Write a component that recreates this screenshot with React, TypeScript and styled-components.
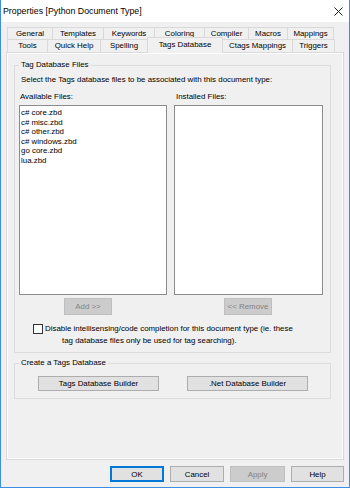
import React from "react";
import styled, { createGlobalStyle } from "styled-components";

interface TabItem {
  label: string;
  width: number;
  selected?: boolean;
}

const topRow: TabItem[] = [
  { label: "General", width: 46 },
  { label: "Templates", width: 52 },
  { label: "Keywords", width: 52 },
  { label: "Coloring", width: 51 },
  { label: "Compiler", width: 45 },
  { label: "Macros", width: 40 },
  { label: "Mappings", width: 47 },
];

const bottomRow: TabItem[] = [
  { label: "Tools", width: 41 },
  { label: "Quick Help", width: 54 },
  { label: "Spelling", width: 48 },
  { label: "Tags Database", width: 76, selected: true },
  { label: "Ctags Mappings", width: 71 },
  { label: "Triggers", width: 43 },
];

const availableFiles = [
  "c# core.zbd",
  "c# misc.zbd",
  "c# other.zbd",
  "c# windows.zbd",
  "go core.zbd",
  "lua.zbd",
];

const GlobalStyle = createGlobalStyle`
  html, body {
    margin: 0;
    padding: 0;
    background: #ffffff;
  }
  body {
    font-family: "Liberation Sans", Arial, sans-serif;
    font-size: 7.9px;
    color: #000;
  }
`;

const Window = styled.div`
  width: 350px;
  height: 488px;
  box-sizing: border-box;
  border: 1px solid #3a8ee6;
  border-top: none;
  background: #f0f0f0;
  display: flex;
  flex-direction: column;
`;

const TitleBar = styled.div`
  height: 22px;
  background: #fff;
  display: flex;
  align-items: center;
  justify-content: space-between;
  padding: 0 6px 0 2px;
  font-size: 8.8px;
`;

const Body = styled.div`
  padding: 0 5px;
  display: flex;
  flex-direction: column;
`;

const TabStrip = styled.div`
  margin: 5px 0 0 1px;
  display: flex;
  flex-direction: column;
`;

const TabRow = styled.div<{ $height: number }>`
  display: flex;
  height: ${(p) => p.$height}px;
`;

const Tab = styled.div<{ $width: number; $selected?: boolean }>`
  box-sizing: border-box;
  width: ${(p) => p.$width}px;
  height: ${(p) => (p.$selected ? "calc(100% + 3px)" : "100%")};
  margin-top: ${(p) => (p.$selected ? "-2px" : "0")};
  position: relative;
  z-index: ${(p) => (p.$selected ? 2 : 1)};
  border: 1px solid #d9d9d9;
  border-bottom: none;
  margin-right: -1px;
  background: #f0f0f0;
  display: flex;
  align-items: center;
  justify-content: center;
  white-space: nowrap;
  line-height: 10px;
  padding-bottom: ${(p) => (p.$selected ? "2px" : "0")};
`;

const Panel = styled.div`
  box-sizing: border-box;
  height: 408px;
  border: 1px solid #d9d9d9;
  box-shadow: inset 1px 1px 0 #ffffff, inset -1px -1px 0 #ffffff;
  display: flex;
  flex-direction: column;
  align-items: flex-start;
  padding-left: 7px;
`;

const GroupBox = styled.fieldset<{ $top: number; $padBottom: number }>`
  box-sizing: border-box;
  width: 317px;
  margin: ${(p) => p.$top}px 0 0 0;
  padding: 0 7px ${(p) => p.$padBottom}px 4px;
  border: 1px solid #dcdcdc;
  min-inline-size: 0;
`;

const GroupTitle = styled.legend`
  padding: 0 2px;
  line-height: 10px;
`;

const Caption = styled.div<{ $top: number; $left: number }>`
  margin: ${(p) => p.$top}px 0 0 ${(p) => p.$left}px;
  line-height: 10px;
  white-space: nowrap;
`;

const Columns = styled.div`
  display: flex;
  gap: 7px;
`;

const Column = styled.div<{ $width: number }>`
  width: ${(p) => p.$width}px;
  display: flex;
  flex-direction: column;
  align-items: flex-start;
`;

const ListBox = styled.div`
  box-sizing: border-box;
  width: 100%;
  height: 190px;
  margin-top: 3px;
  background: #fff;
  border: 1px solid #8c8c8c;
  padding: 2px 0 0 1px;
`;

const ListItem = styled.div`
  line-height: 9.6px;
  white-space: nowrap;
`;

const Button = styled.button<{ $width: number; $height?: number; $offset?: number; $default?: boolean }>`
  box-sizing: border-box;
  width: ${(p) => p.$width}px;
  height: ${(p) => p.$height ?? 15}px;
  margin: 0 0 0 ${(p) => p.$offset ?? 0}px;
  padding: 0;
  font-family: "Liberation Sans", Arial, sans-serif;
  font-size: 7.9px;
  color: #000;
  background: #e1e1e1;
  border: ${(p) => (p.$default ? "2px solid #0078d7" : "1px solid #adadad")};
  display: flex;
  align-items: center;
  justify-content: center;
  white-space: nowrap;

  &:disabled {
    background: #cccccc;
    border-color: #bfbfbf;
    color: #838383;
  }
`;

const MoveButtonRow = styled.div`
  margin-top: 3px;
`;

const CheckRow = styled.div`
  margin: 9px 0 0 14px;
  display: flex;
  align-items: flex-start;
  gap: 2px;
`;

const CheckBox = styled.span`
  box-sizing: border-box;
  width: 10px;
  height: 10px;
  flex: none;
  background: #fff;
  border: 1px solid #333;
`;

const CheckText = styled.div`
  line-height: 12px;
  margin-top: -1px;
  white-space: nowrap;
`;

const Indented = styled.div`
  padding-left: 17px;
`;

const BuilderRow = styled.div`
  margin-top: 8px;
  display: flex;
  gap: 28px;
  padding-left: 19px;
`;

const Footer = styled.div`
  margin-top: 6px;
  display: flex;
  justify-content: flex-end;
  gap: 6px;
`;

const CloseIcon = () => (
  <svg width="9" height="9" viewBox="0 0 9 9">
    <path d="M0.5 0.5 L8.5 8.5 M8.5 0.5 L0.5 8.5" stroke="#222" strokeWidth="1" />
  </svg>
);

const App: React.FC = () => {
  return (
    <>
      <GlobalStyle />
      <Window>
        <TitleBar>
          <span>Properties [Python Document Type]</span>
          <CloseIcon />
        </TitleBar>
        <Body>
          <TabStrip>
            <TabRow $height={12}>
              {topRow.map((t) => (
                <Tab key={t.label} $width={t.width}>
                  {t.label}
                </Tab>
              ))}
            </TabRow>
            <TabRow $height={13}>
              {bottomRow.map((t) => (
                <Tab key={t.label} $width={t.width} $selected={t.selected}>
                  {t.label}
                </Tab>
              ))}
            </TabRow>
          </TabStrip>
          <Panel>
            <GroupBox $top={7} $padBottom={5}>
              <GroupTitle>Tag Database Files</GroupTitle>
              <Caption $top={5} $left={2}>
                Select the Tags database files to be associated with this document type:
              </Caption>
              <Columns>
                <Column $width={148}>
                  <Caption $top={7} $left={1}>
                    Available Files:
                  </Caption>
                  <ListBox>
                    {availableFiles.map((f) => (
                      <ListItem key={f}>{f}</ListItem>
                    ))}
                  </ListBox>
                  <MoveButtonRow>
                    <Button $width={48} $height={17} $offset={45} disabled>
                      Add &gt;&gt;
                    </Button>
                  </MoveButtonRow>
                </Column>
                <Column $width={149}>
                  <Caption $top={7} $left={2}>
                    Installed Files:
                  </Caption>
                  <ListBox />
                  <MoveButtonRow>
                    <Button $width={48} $height={17} $offset={50} disabled>
                      &lt;&lt; Remove
                    </Button>
                  </MoveButtonRow>
                </Column>
              </Columns>
              <CheckRow>
                <CheckBox />
                <CheckText>
                  Disable intellisensing/code completion for this document type (ie. these
                  <Indented>tag database files only be used for tag searching).</Indented>
                </CheckText>
              </CheckRow>
            </GroupBox>
            <GroupBox $top={5} $padBottom={7}>
              <GroupTitle>Create a Tags Database</GroupTitle>
              <BuilderRow>
                <Button $width={121}>Tags Database Builder</Button>
                <Button $width={121}>.Net Database Builder</Button>
              </BuilderRow>
            </GroupBox>
          </Panel>
          <Footer>
            <Button $width={54} $height={16} $default>
              OK
            </Button>
            <Button $width={54} $height={16}>
              Cancel
            </Button>
            <Button $width={55} $height={16} disabled>
              Apply
            </Button>
            <Button $width={53} $height={16}>
              Help
            </Button>
          </Footer>
        </Body>
      </Window>
    </>
  );
};

export default App;
